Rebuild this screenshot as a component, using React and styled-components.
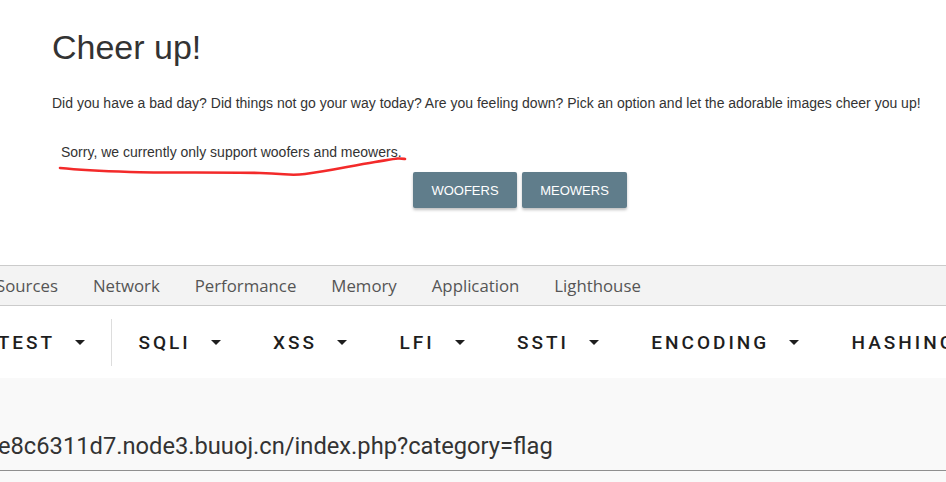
import React from 'react'
import styled, { createGlobalStyle } from 'styled-components'

const Global = createGlobalStyle`
    html, body {
        margin: 0;
        padding: 0;
        background: #fff;
        overflow: hidden;
    }
    body {
        width: 946px;
        height: 482px;
    }
`

const devtoolsTabs = ['Sources', 'Network', 'Performance', 'Memory', 'Application', 'Lighthouse']
const menuItems = ['TEST', 'SQLI', 'XSS', 'LFI', 'SSTI', 'ENCODING', 'HASHING']

const Screen = styled.div`
    width: 946px;
    height: 482px;
    overflow: hidden;
    display: flex;
    flex-direction: column;
`

const Page = styled.section`
    position: relative;
    height: 265px;
    box-sizing: border-box;
    padding: 27px 0 0 52px;
    font-family: "Liberation Sans", Arial, sans-serif;
    color: #333;

    h1 {
        margin: 0;
        font-size: 34px;
        line-height: 40px;
        font-weight: 400;
    }

    .intro {
        margin: 27px 0 0;
        font-size: 14px;
        line-height: 18px;
        white-space: nowrap;
    }

    .sorry {
        margin: 31px 0 0;
        padding-left: 9px;
        font-size: 14px;
        line-height: 18px;
    }
`

const Buttons = styled.div`
    display: flex;
    gap: 5px;
    margin-top: 11px;
    padding-left: 361px;
`

const Button = styled.button`
    height: 36px;
    width: ${(p) => p.$w}px;
    padding: 0;
    border: none;
    border-radius: 2px;
    background: #607d8b;
    color: #fff;
    font-family: "Liberation Sans", Arial, sans-serif;
    font-size: 13px;
    text-transform: uppercase;
    box-shadow: 0 2px 3px rgba(0, 0, 0, 0.25);
`

const Scribble = styled.svg`
    position: absolute;
    left: 0;
    top: 0;
    pointer-events: none;
`

const TabBar = styled.nav`
    height: 39px;
    border-top: 1px solid #cbcbcb;
    border-bottom: 1px solid #cbcbcb;
    background: #f3f3f3;
    display: flex;
    align-items: center;
    margin-left: -21.5px;
`

const Tab = styled.span`
    padding: 0 17.5px;
    font-family: "Open Sans", "Noto Sans", sans-serif;
    font-size: 16.8px;
    color: #555;
    white-space: nowrap;
`

const Menu = styled.div`
    height: 72px;
    background: #fff;
    display: flex;
    align-items: center;
    margin-left: -28.5px;
`

const MenuItem = styled.div`
    display: flex;
    align-items: center;
    padding: 0 26.2px;
    height: 47px;
    font-family: Roboto, "Liberation Sans", sans-serif;
    font-weight: 500;
    font-size: 19px;
    letter-spacing: 3px;
    color: #1e1e1e;
    white-space: nowrap;
    border-right: ${(p) => (p.$divider ? '1px solid #ddd' : 'none')};
`

const Caret = styled.span`
    margin-left: 20px;
    width: 0;
    height: 0;
    border-left: 5px solid transparent;
    border-right: 5px solid transparent;
    border-top: 5px solid #1e1e1e;
`

const UrlArea = styled.div`
    flex: 1;
    background: #f9f9f9;
    padding-top: 50px;
    margin-left: -2px;
`

const Url = styled.div`
    height: 42px;
    border-bottom: 1px solid #8f8f8f;
    font-family: Roboto, "Liberation Sans", sans-serif;
    font-size: 23.7px;
    line-height: 37px;
    color: #333;
    white-space: nowrap;
`

export default function App() {
    return (
        <Screen>
            <Global />
            <Page>
                <h1>Cheer up!</h1>
                <p className="intro">
                    Did you have a bad day? Did things not go your way today? Are you feeling down? Pick an option and let the adorable images cheer you up!
                </p>
                <p className="sorry">Sorry, we currently only support woofers and meowers.</p>
                <Buttons>
                    <Button $w={104}>Woofers</Button>
                    <Button $w={105}>Meowers</Button>
                </Buttons>
                <Scribble width="946" height="265">
                    <path
                        d="M60 168 C 80 170, 100 171, 130 172 S 230 172, 260 173 S 290 176, 305 174 C 330 171, 350 166, 375 162 S 398 158, 405 159"
                        fill="none"
                        stroke="#f32a2a"
                        strokeWidth="2.6"
                        strokeLinecap="round"
                    />
                </Scribble>
            </Page>
            <TabBar>
                {devtoolsTabs.map((t) => (
                    <Tab key={t}>{t}</Tab>
                ))}
            </TabBar>
            <Menu>
                {menuItems.map((m, i) => (
                    <MenuItem key={m} $divider={i === 0}>
                        {m}
                        {i < menuItems.length - 1 && <Caret />}
                    </MenuItem>
                ))}
            </Menu>
            <UrlArea>
                <Url>e8c6311d7.node3.buuoj.cn/index.php?category=flag</Url>
            </UrlArea>
        </Screen>
    )
}
